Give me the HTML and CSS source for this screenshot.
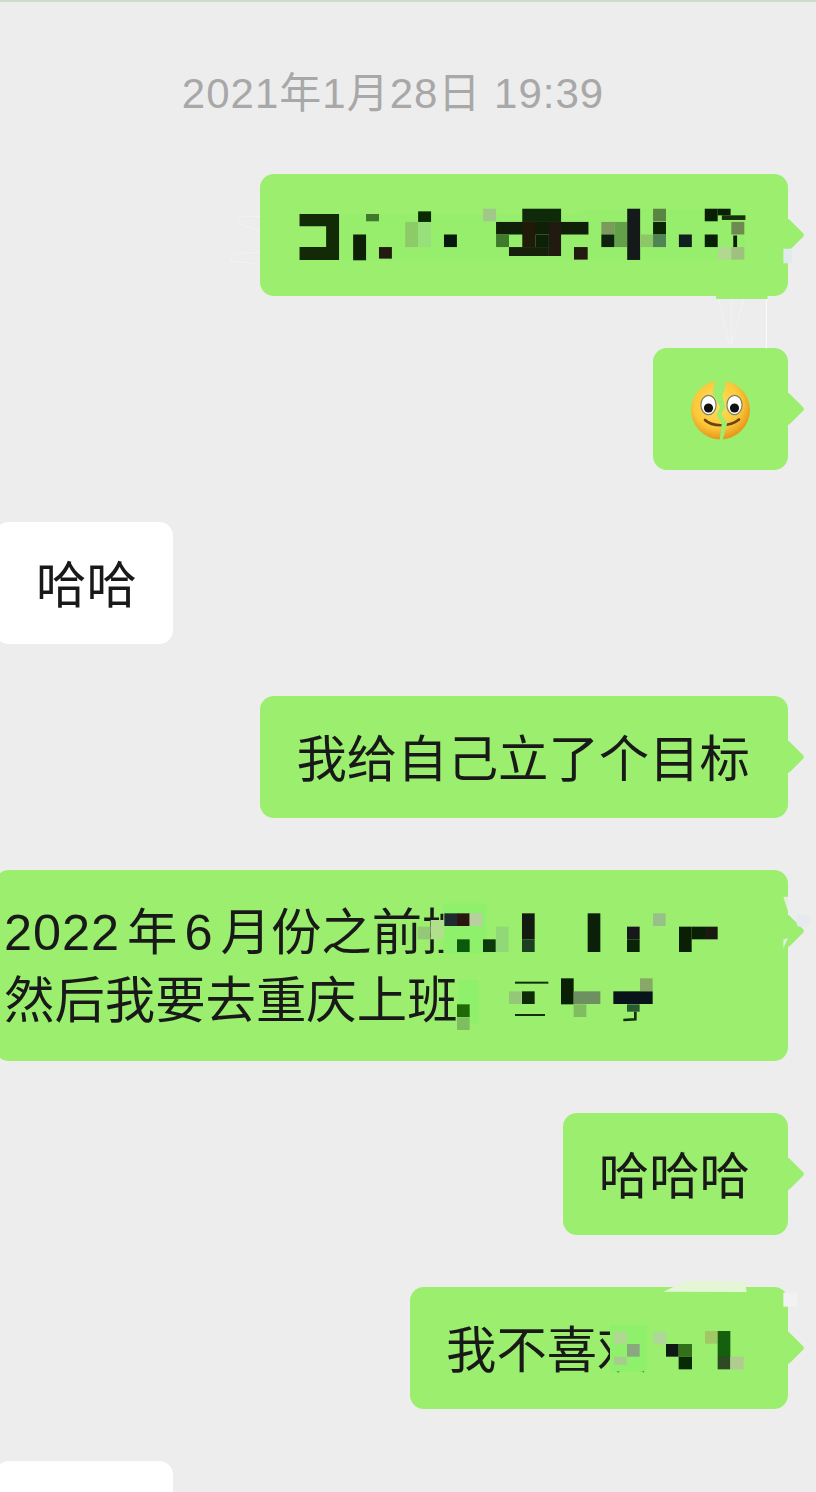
FILE: index.html
```html
<!DOCTYPE html>
<html lang="zh-CN">
<head>
<meta charset="UTF-8">
<meta name="viewport" content="width=device-width, initial-scale=1.0">
<title>聊天记录</title>
<link rel="stylesheet" href="styles.css">
</head>
<body>
<div class="chat">
  <div class="time">2021年1月28日 19:39</div>

  <!-- 第一条整句都被打码了 -->
  <div class="row row-me">
    <div class="bubble bubble-me">
      <div class="blank-line blank-9"></div>
      <svg class="mosaic mosaic-first" viewBox="105 42 1389 369" preserveAspectRatio="none">
        <g fill="none" stroke="#f7f7f7" stroke-width="1.5">
          <path d="M105 170 L50 172 L45 190 L105 215"/>
          <path d="M105 278 L35 285 L25 305 L105 315"/>
          <path d="M1310 412 L1340 560 M1345 412 L1345 560 M1380 412 L1345 560"/>
          <path stroke="#fff" stroke-width="2.5" d="M1437 412 L1437 570"/>
        </g>
        <path fill="#e2e9ef" d="M1482 268 L1505 268 L1505 312 L1482 312 Z"/>
        <rect x="1305" y="405" width="135" height="15" fill="#9bee6e"/>
        <g fill="#96ee6c">
          <rect x="320" y="165" width="620" height="140"/>
          <rect x="940" y="150" width="440" height="150"/>
        </g>
        <path fill="#122a06" d="M209 163 H313 V302 H209 V263 H279 V200 H209 Z"/>
        <rect x="350" y="225" width="34" height="78" fill="#0e1f08"/>
        <rect x="384" y="163" width="34" height="22" fill="#3f7a2c"/>
        <rect x="418" y="263" width="34" height="35" fill="#231a10"/>
        <rect x="487" y="187" width="34" height="76" fill="#8ccb68"/>
        <rect x="521" y="187" width="34" height="76" fill="#97e07a"/>
        <rect x="521" y="155" width="34" height="32" fill="#0a2a04"/>
        <rect x="589" y="225" width="34" height="38" fill="#07190d"/>
        <rect x="692" y="147" width="34" height="38" fill="#a0c888"/>
        <rect x="795" y="147" width="102" height="40" fill="#0f2a08"/>
        <rect x="726" y="187" width="243" height="38" fill="#0f1f08"/>
        <rect x="726" y="225" width="34" height="38" fill="#3f7a2c"/>
        <rect x="795" y="187" width="35" height="76" fill="#201a08"/>
        <rect x="830" y="225" width="35" height="38" fill="#0d2008"/>
        <rect x="865" y="187" width="32" height="103" fill="#201a10"/>
        <rect x="760" y="263" width="105" height="27" fill="#16200a"/>
        <rect x="931" y="263" width="36" height="38" fill="#231a10"/>
        <rect x="1003" y="187" width="34" height="38" fill="#7c9a5e"/>
        <rect x="1037" y="187" width="34" height="76" fill="#62a04a"/>
        <rect x="1003" y="225" width="34" height="38" fill="#10200f"/>
        <rect x="1071" y="147" width="34" height="155" fill="#141a1a"/>
        <rect x="1105" y="225" width="34" height="38" fill="#8cc868"/>
        <rect x="1139" y="147" width="34" height="38" fill="#5a8444"/>
        <rect x="1139" y="187" width="34" height="38" fill="#0c2605"/>
        <rect x="1139" y="225" width="34" height="38" fill="#4f8455"/>
        <rect x="1207" y="225" width="34" height="38" fill="#0f1f20"/>
        <rect x="1275" y="147" width="34" height="38" fill="#0a2005"/>
        <rect x="1309" y="147" width="34" height="20" fill="#0a2005"/>
        <rect x="1320" y="167" width="62" height="14" fill="#16300a"/>
        <rect x="1275" y="225" width="34" height="38" fill="#0a2005"/>
        <rect x="1345" y="187" width="34" height="38" fill="#6f8a50"/>
        <rect x="1350" y="228" width="10" height="36" fill="#0a2005"/>
        <rect x="1310" y="263" width="34" height="38" fill="#b0d890"/>
        <rect x="1345" y="263" width="34" height="38" fill="#a0c080"/>
      </svg>
    </div>
  </div>

  <div class="row row-me">
    <div class="bubble bubble-me">
      <svg class="emoji" viewBox="-1 3 61 68.5">
        <defs>
          <radialGradient id="face" cx="0.45" cy="0.4" r="0.58">
            <stop offset="0" stop-color="#fde25e"/>
            <stop offset="0.7" stop-color="#fbc83a"/>
            <stop offset="1" stop-color="#e89a1c"/>
          </radialGradient>
        </defs>
        <circle cx="30.5" cy="35" r="29.5" fill="url(#face)"/>
        <ellipse cx="18.5" cy="30" rx="7.6" ry="9.6" fill="#fff" stroke="#85805f" stroke-width="1.2"/>
        <ellipse cx="44.5" cy="30" rx="7.6" ry="9.6" fill="#fff" stroke="#85805f" stroke-width="1.2"/>
        <circle cx="18.5" cy="33" r="4.6" fill="#111"/>
        <circle cx="44.5" cy="33" r="4.6" fill="#111"/>
        <path d="M15 45 C22 52 40 52 49 44.5" fill="none" stroke="#6e4310" stroke-width="2.6" stroke-linecap="round"/>
        <path fill="#9bee6e" d="M25.2 4 L22.8 19 L30.2 32.3 L26.5 39.7 L31.8 48.3 L29.6 66 L32.4 66 L37.2 48 L31.2 39.7 L35.2 32.3 L32.3 20.7 L37.5 4 Z"/>
      </svg>
    </div>
  </div>

  <div class="row">
    <div class="bubble bubble-you bubble-flush">哈哈</div>
  </div>

  <div class="row row-me">
    <div class="bubble bubble-me">我给自己立了个目标</div>
  </div>

  <div class="row row-me">
    <div class="bubble bubble-me bubble-long">
      <div><span class="num">2022</span> 年 <span class="num">6</span> 月份之前控</div>
      <div>然后我要去重庆上班，</div>
      <svg class="mosaic mosaic-goal" viewBox="0 -30 1164 573" preserveAspectRatio="none">
        <path fill="#e4eed8" d="M1150 50 L1164 50 L1164 95 Z M1150 175 L1164 175 L1150 205 Z"/>
        <path fill="#e6e9ee" d="M1190 102 L1235 108 L1225 140 L1190 140 Z"/>
        <path fill="#9bee6e" d="M1150 95 L1205 150 L1150 180 Z"/>
        <g fill="#8ff06c">
          <rect x="130" y="70" width="130" height="150"/>
          <rect x="175" y="300" width="60" height="130"/>
        </g>
        <rect x="53" y="140" width="38" height="38" fill="#94c878"/>
        <rect x="92" y="120" width="40" height="58" fill="#b0e08c"/>
        <rect x="133" y="100" width="38" height="38" fill="#1f2a30"/>
        <rect x="171" y="100" width="38" height="38" fill="#2a1510"/>
        <rect x="209" y="100" width="38" height="38" fill="#b8d0a0"/>
        <rect x="171" y="178" width="38" height="38" fill="#0a5a0a"/>
        <rect x="249" y="178" width="38" height="38" fill="#0b3a0b"/>
        <rect x="288" y="140" width="38" height="76" fill="#90d878"/>
        <rect x="366" y="100" width="38" height="78" fill="#141a10"/>
        <rect x="366" y="178" width="38" height="38" fill="#1a4020"/>
        <rect x="563" y="100" width="38" height="116" fill="#0a2008"/>
        <rect x="681" y="140" width="38" height="38" fill="#18181c"/>
        <rect x="681" y="178" width="38" height="38" fill="#0a2408"/>
        <rect x="759" y="100" width="38" height="38" fill="#98c088"/>
        <rect x="837" y="140" width="38" height="76" fill="#0a2005"/>
        <rect x="875" y="140" width="40" height="38" fill="#0a2005"/>
        <rect x="915" y="140" width="38" height="38" fill="#1a1a10"/>
        <rect x="171" y="373" width="38" height="38" fill="#1f6a05"/>
        <rect x="171" y="412" width="38" height="38" fill="#80bc60"/>
        <rect x="327" y="334" width="38" height="38" fill="#94c878"/>
        <rect x="366" y="334" width="38" height="38" fill="#0f2a08"/>
        <rect x="345" y="305" width="100" height="6" fill="#14300a"/>
        <rect x="345" y="402" width="90" height="6" fill="#14300a"/>
        <rect x="483" y="295" width="38" height="78" fill="#0a2005"/>
        <rect x="521" y="334" width="80" height="38" fill="#6e8f60"/>
        <rect x="521" y="373" width="38" height="38" fill="#80bc60"/>
        <rect x="720" y="295" width="38" height="38" fill="#88a868"/>
        <rect x="640" y="334" width="118" height="38" fill="#08141a"/>
        <rect x="681" y="373" width="38" height="22" fill="#2a5a30"/>
        <path fill="none" stroke="#14300a" stroke-width="8" d="M706 395 L706 418 L670 420"/>
      </svg>
    </div>
  </div>

  <div class="row row-me">
    <div class="bubble bubble-me">哈哈哈</div>
  </div>

  <div class="row row-me">
    <div class="bubble bubble-me">我不喜欢<span class="blank-run"></span>
      <svg class="mosaic mosaic-last" viewBox="0 51 684 366" preserveAspectRatio="none">
        <path fill="#e4f6d6" d="M310 65 L380 32 L555 35 L560 66 Z"/>
        <path fill="#f2f2f2" d="M670 68 H712 V110 H670 Z"/>
        <rect x="150" y="165" width="110" height="140" fill="#8ff06c"/>
        <rect x="162" y="185" width="38" height="38" fill="#b0d890"/>
        <rect x="201" y="222" width="38" height="38" fill="#8aa880"/>
        <rect x="162" y="260" width="38" height="24" fill="#a8cc90"/>
        <rect x="280" y="185" width="38" height="38" fill="#aed898"/>
        <rect x="318" y="222" width="38" height="38" fill="#0f1a15"/>
        <rect x="356" y="222" width="40" height="38" fill="#33701a"/>
        <rect x="356" y="260" width="40" height="38" fill="#082a04"/>
        <rect x="435" y="183" width="38" height="38" fill="#a2c866"/>
        <rect x="473" y="183" width="38" height="78" fill="#14600f"/>
        <rect x="473" y="260" width="38" height="38" fill="#2d4a22"/>
        <rect x="511" y="260" width="40" height="38" fill="#b0cc90"/>
      </svg>
    </div>
  </div>

  <div class="row">
    <div class="bubble bubble-you bubble-flush bubble-cut"></div>
  </div>
</div>
</body>
</html>
```

FILE: styles.css
```css
html, body {
  margin: 0;
  height: 1492px;
  overflow: hidden;
}
body {
  background-color: #ededed;
  color: #191919;
  font-family: "Liberation Sans", "Noto Sans CJK SC", sans-serif;
  border-top: 2px solid #cfdac8;
  box-sizing: border-box;
}
.chat {
  display: flex;
  flex-direction: column;
  gap: 52px;
  margin-top: -2px;
}
.time {
  padding: 65px 30px 0 0;
  line-height: 57px;
  text-align: center;
  font-size: 42px;
  letter-spacing: 1px;
  color: #a8a8a8;
}
.row {
  display: flex;
}
.row-me {
  justify-content: flex-end;
  padding-right: 28px;
}
.bubble {
  position: relative;
  padding: 30px 38px 23.5px 36px;
  border-radius: 14px;
  font-size: 50.4px;
  line-height: 68.5px;
}
.bubble-me {
  background-color: #9bee6e;
}
/* 小尾巴跟第一行对齐，多行气泡也一样 */
.bubble-me::after {
  content: "";
  position: absolute;
  top: 49px;
  right: -12px;
  width: 24px;
  height: 24px;
  background-color: #9bee6e;
  border-radius: 3px;
  transform: rotate(45deg);
}
.bubble-you {
  background-color: #fff;
}
.bubble-flush {
  margin-left: -5px;
  padding-left: 41px;
  padding-right: 36px;
}
.bubble-cut {
  width: 101px;
  height: 31px;
  padding-top: 0;
  padding-bottom: 0;
  border-radius: 14px 14px 0 0;
}
.bubble-long {
  flex: 1;
  margin-left: -5px;
  padding: 29px 38px 26px 9px;
  line-height: 68px;
  word-spacing: -7px;
}
.num {
  letter-spacing: 1px;
}
.blank-line {
  height: 68.5px;
}
.blank-9 {
  width: 454px;
}
.blank-run {
  display: inline-block;
  width: 102.4px;
}
.emoji {
  display: block;
  width: 61px;
  height: 68.5px;
}
.mosaic {
  position: absolute;
  top: 0;
  right: 0;
  overflow: visible;
  z-index: 1;
}
.mosaic-first {
  width: 100%;
  height: 100%;
}
.mosaic-goal {
  width: 388px;
  height: 100%;
}
.mosaic-last {
  width: 228px;
  height: 100%;
}
```
